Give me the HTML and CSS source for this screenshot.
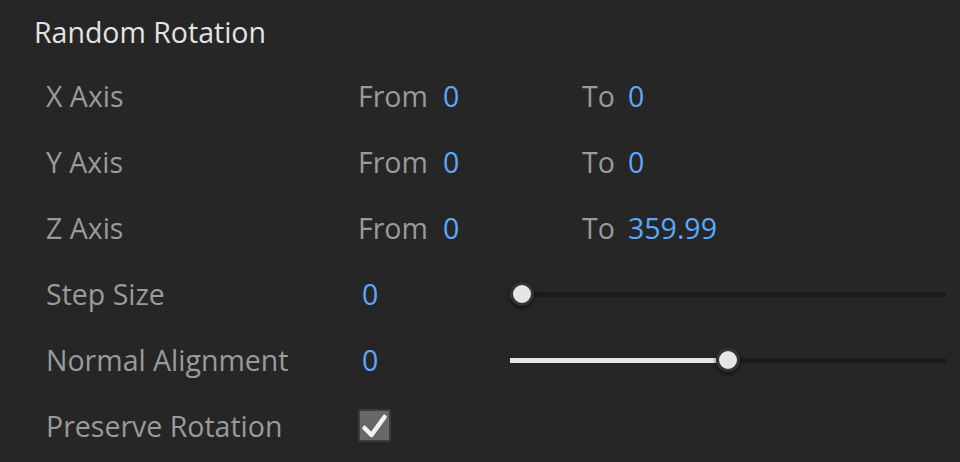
FILE: index.html
```html
<!DOCTYPE html>
<html>
<head>
<meta charset="utf-8">
<link rel="stylesheet" href="styles.css">
</head>
<body>
<div class="panel">
  <div class="title">Random Rotation</div>
  <div class="row">
    <div class="label">X Axis</div>
    <div class="from"><span class="key">From</span><span class="val">0</span></div>
    <div class="to"><span class="key">To</span><span class="val">0</span></div>
  </div>
  <div class="row">
    <div class="label">Y Axis</div>
    <div class="from"><span class="key">From</span><span class="val">0</span></div>
    <div class="to"><span class="key">To</span><span class="val">0</span></div>
  </div>
  <div class="row">
    <div class="label">Z Axis</div>
    <div class="from"><span class="key">From</span><span class="val">0</span></div>
    <div class="to"><span class="key">To</span><span class="val">359.99</span></div>
  </div>
  <div class="row">
    <div class="label">Step Size</div>
    <div class="num">0</div>
    <div class="slider" style="--p:0">
      <div class="track"></div>
      <div class="fill"></div>
      <div class="thumb"></div>
    </div>
  </div>
  <div class="row">
    <div class="label">Normal Alignment</div>
    <div class="num">0</div>
    <div class="slider" style="--p:0.5">
      <div class="track"></div>
      <div class="fill"></div>
      <div class="thumb"></div>
    </div>
  </div>
  <div class="row">
    <div class="label">Preserve Rotation</div>
    <div class="check">
      <svg width="29" height="29" viewBox="0 0 29 29"><path d="M4.5 17 L11.5 24 L24.5 6" fill="none" stroke="#f2f2f2" stroke-width="4.5" stroke-linecap="round" stroke-linejoin="round"/></svg>
    </div>
  </div>
</div>
</body>
</html>
```

FILE: styles.css
```css
html, body {
  margin: 0;
  padding: 0;
  background: #262626;
}
body {
  font-family: "Open Sans", "Noto Sans", sans-serif;
  width: 960px;
  height: 462px;
  overflow: hidden;
}
.panel {
  display: flex;
  flex-direction: column;
}
.title {
  height: 63px;
  display: flex;
  align-items: center;
  padding-left: 34px;
  font-size: 28.5px;
  color: #e3e3e3;
}
.row {
  height: 66px;
  display: flex;
  align-items: center;
  padding-left: 46px;
  font-size: 28.5px;
  color: #9a9a9a;
}
.label {
  width: 312px;
  flex: none;
}
.from {
  width: 224px;
  flex: none;
  display: flex;
}
.from .key {
  width: 85px;
}
.to {
  display: flex;
}
.to .key {
  width: 46px;
}
.val, .num {
  color: #5ca8ff;
}
.num {
  width: 152px;
  padding-left: 4px;
  box-sizing: border-box;
  flex: none;
}
.slider {
  position: relative;
  width: 436px;
  height: 26px;
  flex: none;
  margin-bottom: 1px;
}
.track {
  position: absolute;
  left: 0;
  right: 0;
  top: 11px;
  height: 5px;
  background: #1b1b1b;
}
.fill {
  position: absolute;
  left: 0;
  top: 11px;
  height: 5px;
  width: calc(12px + (100% - 24px) * var(--p));
  background: #e6e6e6;
}
.thumb {
  position: absolute;
  top: 1px;
  left: calc((100% - 24px) * var(--p));
  width: 18px;
  height: 18px;
  border-radius: 50%;
  background: #e6e6e6;
  border: 3px solid #333333;
  box-shadow: 0 2px 4px rgba(0,0,0,0.6);
}
.check {
  width: 29px;
  height: 29px;
  margin-bottom: 2px;
  background: #686868;
  border: 2px solid #3c3c3c;
  border-radius: 2px;
  display: flex;
}
```
